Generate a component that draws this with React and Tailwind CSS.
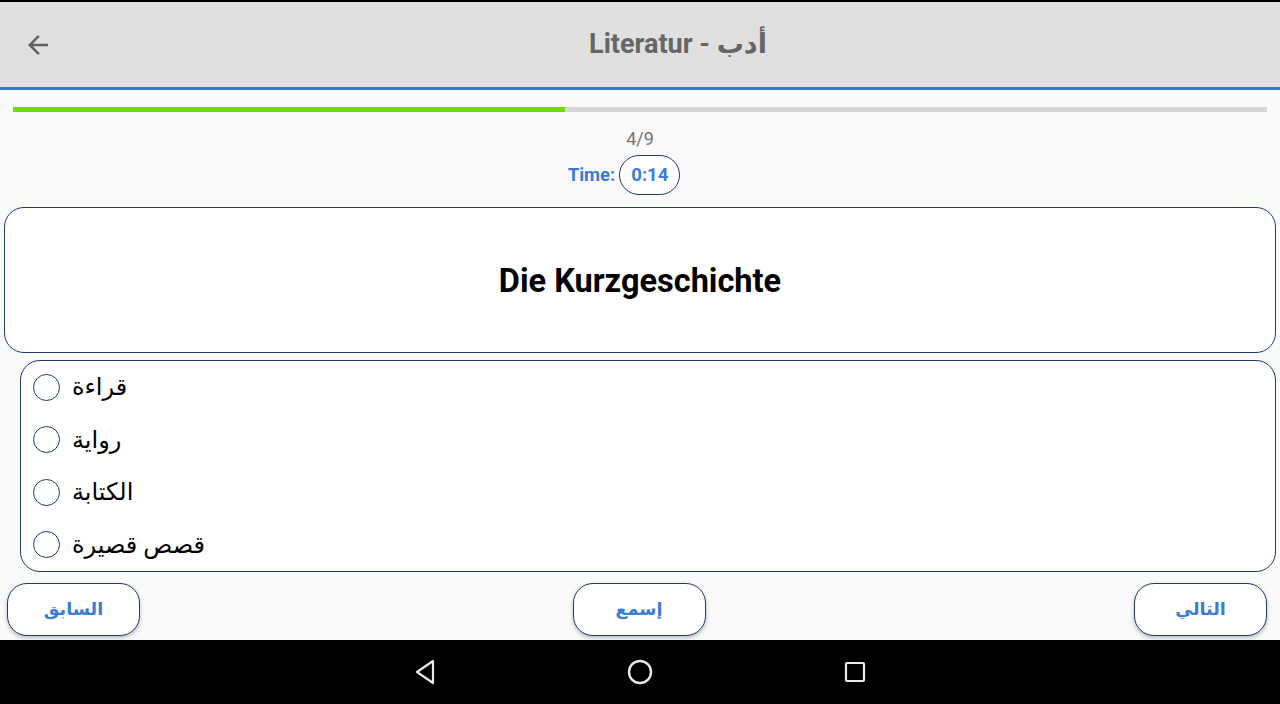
const options = ["قراءة", "رواية", "الكتابة", "قصص قصيرة"];

export default function App() {
  const current = 4;
  const total = 9;
  const progress = ((current - 0.04) / total) * 100;

  return (
    <div className="w-[1280px] h-[704px] flex flex-col bg-[#fafafa] font-['Roboto','DejaVu_Sans',sans-serif] overflow-hidden">
      {/* status strip */}
      <div className="h-[2px] bg-black" />

      {/* Toolbar */}
      <div className="h-[88px] flex items-center bg-[#e0e0e0] border-b-[3px] border-[#3a78c9]">
        <button className="w-[76px] h-full flex items-center justify-center">
          <svg width="30" height="30" viewBox="0 0 24 24" fill="#616161">
            <path d="M20 11H7.83l5.59-5.59L12 4l-8 8 8 8 1.41-1.41L7.83 13H20v-2z" />
          </svg>
        </button>
        <h1 className="flex-1 text-center text-[27px] font-bold text-[#666666]">
          Literatur - أدب
        </h1>
      </div>

      {/* Progress */}
      <div className="px-[13px] pt-[17px]">
        <div className="h-[5px] bg-[#d6d6d6]">
          <div className="h-full bg-[#6fdc00]" style={{ width: `${progress}%` }} />
        </div>
      </div>

      <div className="mt-[16px] text-center text-[18px] leading-[22px] text-[#757575]">
        {current}/{total}
      </div>
      <div className="mt-[5px] mr-[32px] flex items-center justify-center gap-[4px]">
        <span className="pt-[2px] text-[18.5px] font-bold text-[#3a7bd5]">Time:</span>
        <span className="h-[40px] px-[11px] pt-[2px] flex items-center rounded-full border border-[#1e3a6e] bg-white text-[18.5px] font-bold text-[#3a7bd5]">
          0:14
        </span>
      </div>

      {/* Question */}
      <div className="mx-[4px] mt-[12px] h-[146px] flex items-center justify-center rounded-[20px] border border-[#1e3a6e] bg-white">
        <span className="pt-[3px] text-[32.5px] font-bold text-black">Die Kurzgeschichte</span>
      </div>

      {/* Options */}
      <div className="ml-[20px] mr-[4px] mt-[7px] h-[212px] flex flex-col rounded-[20px] border border-[#1e3a6e] bg-white">
        {options.map((opt) => (
          <label key={opt} className="h-[53px] flex items-center gap-[12px] pl-[12px]">
            <span className="w-[27px] h-[27px] rounded-full border-[1.5px] border-[#1e3a6e] bg-white" />
            <span dir="rtl" className="text-[24px] text-black">{opt}</span>
          </label>
        ))}
      </div>

      {/* Buttons */}
      <div className="mt-[11px] pl-[7px] pr-[13px] flex items-center justify-between">
        {["السابق", "إسمع", "التالي"].map((label, i) => (
          <button
            key={label}
            className={`w-[133px] h-[53px] rounded-[20px] border border-[#1e3a6e] bg-white shadow-[0_2px_4px_rgba(0,0,0,0.25)] text-[17.5px] font-bold text-[#3a7bd5] ${
              i === 1 ? "ml-[4px]" : ""
            }`}
          >
            {label}
          </button>
        ))}
      </div>

      {/* Android nav bar */}
      <div className="mt-auto h-[64px] bg-black flex items-center justify-center gap-[191px]">
        <svg width="22" height="26" viewBox="0 0 22 26" fill="none" stroke="#e8e8e8" strokeWidth="2.2" strokeLinejoin="round">
          <path d="M19 2 L3 13 L19 24 Z" />
        </svg>
        <svg width="26" height="26" viewBox="0 0 26 26" fill="none" stroke="#e8e8e8" strokeWidth="2.4">
          <circle cx="13" cy="13" r="11" />
        </svg>
        <svg width="22" height="22" viewBox="0 0 22 22" fill="none" stroke="#e8e8e8" strokeWidth="2.2">
          <rect x="2" y="2" width="18" height="18" rx="1" />
        </svg>
      </div>
    </div>
  );
}
